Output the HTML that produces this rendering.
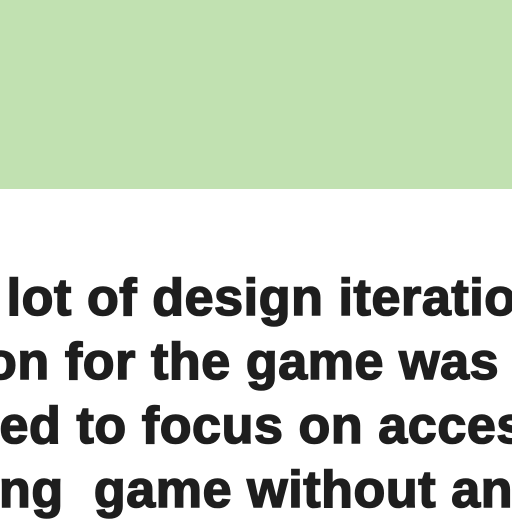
<!DOCTYPE html>
<html><head><style>
html,body{margin:0;padding:0;width:512px;height:512px;overflow:hidden;background:#fff;}
.g{position:absolute;left:0;top:0;width:512px;height:189px;background:#c1e1b1;}
.t{position:absolute;white-space:pre;font-family:"Liberation Sans",sans-serif;font-weight:bold;font-size:52px;line-height:64px;color:#1e1e1e;letter-spacing:0.6px;-webkit-text-stroke:1.6px #1e1e1e;}
</style></head><body>
<div class="g"></div>
<div class="t" style="left:-38px;top:266px">a lot of design iteration</div>
<div class="t" style="left:-30px;top:330px">ion for the game was</div>
<div class="t" style="left:-30px;top:394px">sed to focus on access</div>
<div class="t" style="left:-16px;top:458px">ing  game without an</div>
</body></html>
